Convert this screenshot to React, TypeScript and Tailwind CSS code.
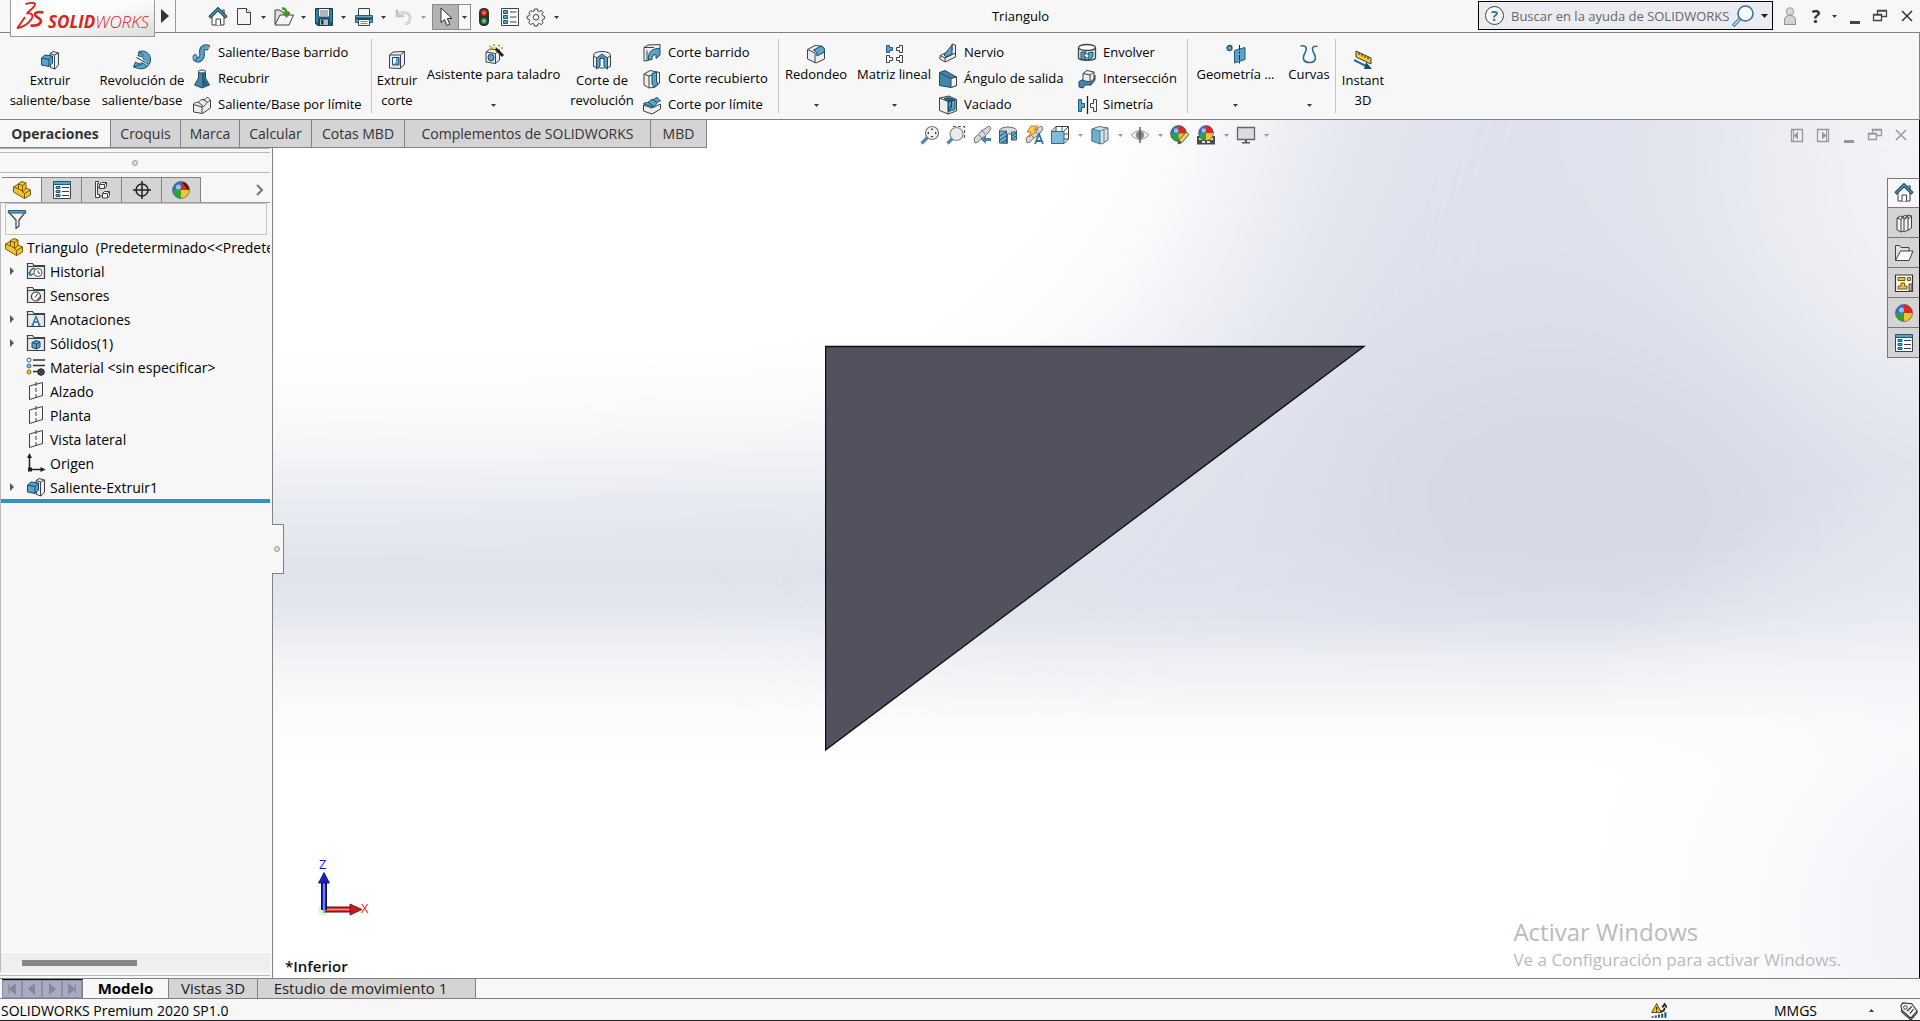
import React from 'react';

type IconProps = { size?: number };

const INK = '#3f4144';
const BLUE = '#5ba3c7';
const DEEP = '#1d5c80';
const PALE = '#eceeef';

const Svg: React.FC<{ size?: number; children: React.ReactNode }> = ({ size = 20, children }) => (
  <svg width={size} height={size} viewBox="0 0 20 20" fill="none" className="shrink-0" aria-hidden="true">
    {children}
  </svg>
);

const Caret = ({ color = '#3a3a3a', up = false }: { color?: string; up?: boolean }) => (
  <svg width="5" height="3" viewBox="0 0 5 3" className="shrink-0" aria-hidden="true">
    <path d={up ? 'M0 3h5L2.5 0z' : 'M0 0h5L2.5 3z'} fill={color} />
  </svg>
);

/* ---------- title bar icons ---------- */

const HomeIcon = () => (
  <Svg>
    <path d="M4 9v9h12V9l-6-5z" fill="#fbfbfb" stroke={INK} />
    <path d="M8 18v-6h4.500v6" fill="#fff" stroke={INK} />
    <path d="M13.800 3h2.200v4" stroke={INK} strokeWidth="1.200" />
    <path d="M1.500 10.500 10 2l8.500 8.500" stroke="#143f5a" strokeWidth="3.200" />
    <path d="M2 10 10 2.200 18 10" stroke="#4c99c1" strokeWidth="1.400" />
  </Svg>
);

const NewIcon = () => (
  <Svg>
    <path d="M3.500 1.500h9l4 4v12h-13z" fill="#f4f4f4" stroke={INK} />
    <path d="M12.500 1.500v4h4" fill="#fff" stroke={INK} />
  </Svg>
);

const OpenIcon = () => (
  <Svg>
    <path d="M1 17V3h5l2 2h7v3" fill="#dedede" stroke={INK} />
    <path d="M1 18 6 8h13.500l-4.500 10z" fill="#f5f5f5" stroke={INK} />
    <path d="M8 1.500c3 0 4.500 1 4.500 5" stroke="#3c9a10" strokeWidth="2.400" />
    <path d="M8.500 6h8l-4 5z" fill="#3c9a10" />
  </Svg>
);

const SaveIcon = () => (
  <Svg>
    <path d="M1.500 1.500h17v17h-15l-2-2z" fill={DEEP} stroke="#173f55" />
    <path d="M5 2h10v7.500H5z" fill="#f2f2f2" />
    <path d="M6 4h8M6 6h8M6 8h8" stroke="#777" />
    <path d="M5.500 12h9v6.500h-9z" fill="#b9bdc0" stroke="#173f55" />
    <path d="M7 13h2.500v4.500H7z" fill="#173f55" />
    <path d="M3 3v12M17 3v12" stroke={BLUE} />
  </Svg>
);

const PrintIcon = () => (
  <Svg>
    <path d="M4.500 8V1.500h11V8" fill="#f6f6f6" stroke={INK} />
    <path d="M1.500 8.500h17v7h-17z" fill={BLUE} stroke={DEEP} />
    <path d="M2 11.500h16" stroke="#164560" strokeWidth="2" />
    <path d="M4.500 12.500h11v6h-11z" fill="#f6f6f6" stroke={INK} />
    <path d="M6.500 14.500h7M6.500 16.500h7" stroke="#8a8a8a" />
  </Svg>
);

const UndoIcon = () => (
  <Svg>
    <path d="M3 2.500v6.500h7M4 8c3-4 12-3 12 3 0 3-2 5.500-5 6" stroke="#c3c3c3" strokeWidth="2.600" />
    <path d="M4 8c3-4 12-3 12 3 0 3-2 5.500-5 6" stroke="#eee" />
  </Svg>
);

const PointerIcon = () => (
  <Svg>
    <path d="M5 1v14.500l3.500-3 2.500 6 2.800-1.200-2.500-5.800H16z" fill="#fff" stroke="#2f2f2f" />
  </Svg>
);

const TrafficIcon = () => (
  <Svg>
    <rect x="5" y="1" width="10" height="18" rx="4.500" fill="#2f2f2f" />
    <circle cx="10" cy="5.800" r="3" fill="#e0301e" />
    <circle cx="10" cy="5.800" r="1.100" fill="#ff9c8a" />
    <circle cx="10" cy="14" r="3" fill="#2f9b3a" />
    <circle cx="10" cy="14" r="1.100" fill="#b6f0b0" />
  </Svg>
);

const ListBoxIcon = ({ header = false }: { header?: boolean }) => (
  <Svg>
    <path d="M1.500 1.500h17v17h-17z" fill="#fafafa" stroke={INK} />
    {header && <path d="M1.500 1.500h17v3h-17z" fill={BLUE} stroke={DEEP} />}
    <path
      d={header ? 'M4 6.500h4v2H4zM4 10.500h4v2H4zM4 14.500h4v2H4z' : 'M3.500 3.500h4v3h-4zM3.500 8.500h4v3h-4zM3.500 13.500h4v3h-4z'}
      fill={BLUE}
      stroke={DEEP}
    />
    <path d={header ? 'M10 7.500h7M10 11.500h7M10 15.500h7' : 'M10 5h6.500M10 10h6.500M10 15h6.500'} stroke={INK} />
  </Svg>
);

const GearIcon = () => (
  <Svg>
    <path
      d="M8.500 2h3l.5 2 1.500.7L15.400 3.500l1.800 2-1.200 1.900.6 1.400 2 .5v2.400l-2 .7-.6 1.400 1.200 1.900-2 1.900-1.900-1.100-1.500.6-.5 2h-2.800l-.5-2-1.500-.6-1.900 1.100-1.900-1.900 1.100-1.900-.6-1.500-2-.5V9.200l2-.5.600-1.400L3 5.500l1.900-2 1.800 1.100L8 4z"
      fill="#f2f2f2"
      stroke={INK}
    />
    <circle cx="10" cy="10.300" r="2.800" fill="#f7f7f7" stroke={INK} />
  </Svg>
);

const UserIcon = () => (
  <Svg>
    <circle cx="10" cy="5.500" r="3.800" fill="#d8d8d8" stroke="#9b9b9b" />
    <path d="M4.500 18.500v-4.500c0-3 2-4.500 5.500-4.500s5.500 1.500 5.500 4.500v4.500z" fill="#d4d4d4" stroke="#8f8f8f" />
  </Svg>
);

const MagnifierIcon = () => (
  <svg width="24" height="24" viewBox="0 0 24 24" fill="none" aria-hidden="true">
    <path d="m2 22 7-7" stroke="#39759a" strokeWidth="3.400" />
    <path d="m2.500 21.500 6.500-6.500" stroke="#dbe8f0" strokeWidth="1.200" />
    <circle cx="14.500" cy="9.500" r="7.500" fill="#f7f9fb" stroke="#39759a" strokeWidth="1.600" />
  </svg>
);

const MinimizeIcon = () => (
  <Svg>
    <path d="M5 12h10v3H5z" fill="currentColor" />
  </Svg>
);

const RestoreIcon = () => (
  <Svg>
    <path d="M3.500 8.500h8v6h-8zM7.500 8V4.500h9v6H12M3 9h9M7 5h10" stroke="currentColor" strokeWidth="1.300" />
  </Svg>
);

const CloseIcon = () => (
  <Svg>
    <path d="m5 5 10 10M15 5 5 15" stroke="currentColor" strokeWidth="1.500" />
  </Svg>
);

/* ---------- ribbon icons ---------- */

const ExtrudeIcon = () => (
  <Svg>
    <path d="M10 3.500 13 1.500l5.500 1.500v12l-3.500 4-4.500-1.500z" fill={PALE} stroke={INK} />
    <path d="M14.500 19V5l4-2M14.500 5 10 3.500" stroke={INK} />
    <path d="M1.500 8 5 5l7.500 1v7L9 16.500 1.500 15z" fill={BLUE} stroke="#164a68" />
    <path d="M1.500 8 9 9.500v7M9 9.500 12.500 6" stroke="#164a68" />
  </Svg>
);

const RevolveIcon = () => (
  <Svg>
    <path
      d="M7 1.500c6-2 12 2 11.500 8.500-.5 6-6 10-12 8.500L1.500 17l2-5c3 2 6 2 8-1 1-3-1-5-5.500-5z"
      fill={BLUE}
      stroke="#1b5475"
    />
    <path d="M6.500 2.500c2 0 4 1 5 3M12 13l3 4M2 17c3-2 7-2 10-4" stroke="#1b5475" />
    <path d="M5 7.500 15.500 14" stroke="#fff" strokeWidth="2.200" />
    <path d="M4.500 7.500 16 14" stroke="#222" />
  </Svg>
);

const SweepIcon = () => (
  <Svg>
    <path d="M3 15.500c4 3.500 8-1 7-5.500-1-5 3-7 7-5" stroke="#1b5475" strokeWidth="5.600" />
    <path d="M3 15.500c4 3.500 8-1 7-5.500-1-5 3-7 7-5" stroke={BLUE} strokeWidth="3.600" />
    <ellipse cx="3" cy="14.500" rx="2" ry="3" fill="#7fbedb" stroke="#1b5475" />
  </Svg>
);

const LoftIcon = () => (
  <Svg>
    <path d="M6.500 2h7v7l4 7-7.500 3L2.500 16l4-7z" fill="#3f87ad" stroke={INK} />
    <path d="M10 3v15l6-2.500-3.500-6V3z" fill="#1f5f82" />
    <ellipse cx="10" cy="2.500" rx="3.500" ry="1.500" fill="#f4f4f4" stroke={INK} />
  </Svg>
);

const BoundaryIcon = () => (
  <Svg>
    <path d="M1.500 9c2-3 4 0 6-3 3-3 5 0 8-4l3 3v8l-8 5.500L1.500 17z" fill={PALE} stroke={INK} />
    <path d="M1.500 9.500 10 12c3 0 3-4 8-6.500M10 12v6.500M6 7l5 4M10 4l5 3" stroke={INK} />
  </Svg>
);

const CutExtrudeIcon = () => (
  <Svg>
    <path d="M2.500 5 6 2l11.500-.5v13L13 18.500l-10.500-.5z" fill={PALE} stroke={INK} />
    <path d="M2.500 5h11v13.500M13.500 5l4-3.500" stroke={INK} />
    <path d="M5.500 7.500h6.500v7.500H5.500z" fill={BLUE} stroke="#164a68" />
    <path d="M6 8h3v4l-3 2.500z" fill="#fff" />
  </Svg>
);

const HoleWizardIcon = () => (
  <Svg>
    <path d="M2 8 6 5l9.500 1v10L11.500 19.500 2 18z" fill={PALE} stroke={INK} />
    <path d="M2 8l9.500 1.500v10M11.500 9.500 15.500 6" stroke={INK} />
    <ellipse cx="7" cy="13.500" rx="3" ry="3.500" fill={BLUE} stroke="#164a68" />
    <path d="m11 4 8 8" stroke="#222" strokeWidth="2.800" />
    <path d="m10 5 2-2" stroke="#f5d33c" strokeWidth="2" />
    <path d="M5 2.500h2M9 1h2M14 1.500h2M7 4h2M17 4h2" stroke="#d9861b" strokeWidth="1.600" />
  </Svg>
);

const CutRevolveIcon = () => (
  <Svg>
    <path d="M1.500 5.500v11c3 1 5 1.500 8.500 1.500s6-.5 8.500-1.500v-11" fill={PALE} stroke={INK} />
    <ellipse cx="10" cy="5" rx="8.500" ry="3.500" fill="#f6f6f6" stroke={INK} />
    <path d="m4.500 8 5.500-4 5.500 4v11l-3.500-3V8L10 6.500 8 8v8l-3.500 3z" fill={BLUE} stroke="#164a68" />
  </Svg>
);

const CutSweepIcon = () => (
  <Svg>
    <path d="M2 4.500 6 2l12-.5V5L6.500 17.500 2 18z" fill={PALE} stroke={INK} />
    <path d="M2 4.500h10M5 17.500v-10" stroke={INK} />
    <path d="M6.500 17c-1-7 3-12 11.500-11.500V12L14 15.500v-4c-3 0-4 2-4 5z" fill={BLUE} stroke="#164a68" />
  </Svg>
);

const CutLoftIcon = () => (
  <Svg>
    <path d="M2 5 8 1.500l9.500 2V14l-4 4L7 19l-5-3z" fill={PALE} stroke={INK} />
    <path d="M2 5l5 2v12M7 7l3-1" stroke={INK} />
    <path d="M10 4.500 14.500 3v9l1.500 3-4 3-2-3z" fill={BLUE} stroke="#164a68" />
  </Svg>
);

const CutBoundaryIcon = () => (
  <Svg>
    <path d="M1.500 10 10 13l8.500-4v5L10 19l-8.500-3z" fill={PALE} stroke={INK} />
    <path d="M1.500 9c2-3 4 0 6-3 3-3 5 0 7-4l4 4c-4 0-4 5-8 6z" fill={BLUE} stroke="#164a68" />
    <path d="M6 7l5 4M10 4.500l5 3" stroke="#164a68" />
  </Svg>
);

const FilletIcon = () => (
  <Svg>
    <path d="M1.500 5.500 9 1.500l6 .5c3 1 3.500 3 3.500 6v7L10 19l-8.500-4z" fill={PALE} stroke={INK} />
    <path d="M1.500 5.500 9 9v10" stroke={INK} />
    <path d="M7.500 6 15 2c3 1 3.500 3 3.500 6L11 12c0-3-1-5-3.500-6z" fill={BLUE} stroke="#164a68" />
  </Svg>
);

const PatternIcon = () => (
  <Svg>
    <path d="M2.500 1.500h3v2h3v3h-3v2h-3z" fill={BLUE} stroke={DEEP} />
    <path
      d="M18.500 1.500h-3v2h-3v3h3v2h3zM2.500 11.500h3v2h3v3h-3v2h-3zM18.500 11.500h-3v2h-3v3h3v2h3z"
      fill="#fafafa"
      stroke={INK}
    />
  </Svg>
);

const RibIcon = () => (
  <Svg>
    <path d="M2 12.500 14 7V1l3.500 1v12L7 19l-5-3z" fill={PALE} stroke={INK} />
    <path d="M2 12.500 7 15l10.500-5M7 15v4" stroke={INK} />
    <path d="M6 12 14 2v9l-6 3z" fill={BLUE} stroke="#164a68" />
  </Svg>
);

const DraftIcon = () => (
  <Svg>
    <path d="M1.500 3.500 7 1.500 18.500 8v8.500L13 18.500l-11.500-2z" fill="#3c86ad" stroke={INK} />
    <path d="M1.500 3.500 13 9.500l5.500-1.500" stroke={INK} />
    <path d="M13 9.500 18.500 8v8.500L13 18.500z" fill="#f4f4f4" stroke={INK} />
  </Svg>
);

const ShellIcon = () => (
  <Svg>
    <path d="M1.500 3 11 1l7.500 3.500V16L10 19l-8.500-3.500z" fill={PALE} stroke={INK} />
    <path d="M1.500 3 10 6.500V19M10 6.500l8.500-2" stroke={INK} />
    <path d="M10.500 7 17 5v9.500l-6.500 2z" fill={BLUE} stroke="#164a68" />
    <path d="m6 3.500 5-1 5 2-6 1.500zM10.500 16l3-4V6" fill="#2a6d92" stroke="#164a68" />
  </Svg>
);

const WrapIcon = () => (
  <Svg>
    <path d="M1.500 5v10c1 3 16 3 17 0V5" fill={PALE} stroke={INK} strokeWidth="1.300" />
    <ellipse cx="10" cy="4.500" rx="8.500" ry="3" fill="#fbfbfb" stroke={INK} strokeWidth="1.300" />
    <path d="M4 9h5v2H7v3h2v3l-5-1zM11 10l5-1v3c0 3-2 4-5 5v-3c2 0 2-2 0-2z" fill={BLUE} stroke="#164a68" />
  </Svg>
);

const IntersectIcon = () => (
  <Svg>
    <path d="M2 12.500 9 9l6 1 3-4v5l-4 5H8l-2 3-4-1z" fill="#3f87ad" stroke="#164a68" />
    <path d="M6 4.500 10 1.500l7 1.500v7l-4 3-7-1.500z" fill={PALE} stroke={INK} />
    <path d="M6 4.500 13 6v7M13 6l4-3" stroke={INK} />
  </Svg>
);

const MirrorIcon = () => (
  <Svg>
    <path d="M1.500 4.500H4.500v4h3v4h-3v4h-3z" fill={BLUE} stroke={DEEP} />
    <path d="M19.500 4.500h-3v4h-3v4h3v4h3z" fill="#fafafa" stroke={INK} />
    <path d="M10.500 1v18" stroke="#222" strokeWidth="1.300" />
  </Svg>
);

const GeometryIcon = () => (
  <Svg>
    <circle cx="3.500" cy="4" r="2.500" fill={BLUE} stroke={DEEP} strokeWidth="1.300" />
    <path d="m8.500 6.500 10.500-3v12L8.500 19z" fill={BLUE} stroke={DEEP} />
    <path d="M13.500 1v19" stroke="#222" strokeDasharray="5 1.500 2 1.500" />
  </Svg>
);

const CurvesIcon = () => (
  <Svg>
    <path d="M1.500 2c6-1 7 2 4.500 7-3.500 6-1 9.500 4.500 9.500s7.500-3.500 4.500-9c-3-6-1-8 3.500-7" stroke="#2f6d93" strokeWidth="1.600" />
  </Svg>
);

const InstantIcon = () => (
  <Svg>
    <path d="m3 1 15 7v6L3 7z" fill="#f3cd3c" stroke="#3a3a3a" />
    <path d="M6 2.500V5M9 4v2.500M12 5.500V8M15 7v2.500" stroke="#222" />
    <path d="m1 10 12 6" stroke="#2b7098" strokeWidth="2" />
    <path d="m11 19 2-7 6 7z" fill="#1d4f70" />
  </Svg>
);

/* ---------- view toolbar icons ---------- */

const ZoomFitIcon = () => (
  <Svg>
    <path d="m1.500 18.500 6-6" stroke="#4d8db3" strokeWidth="3.200" />
    <circle cx="12" cy="8" r="6.500" fill="#f1f3f5" stroke="#777" strokeWidth="1.200" />
    <path d="m12 3 1.500 2h-3zM12 13l1.500-2h-3zM7 8l2-1.500v3zM17 8l-2-1.500v3z" fill="#444" />
  </Svg>
);

const ZoomAreaIcon = () => (
  <Svg>
    <path d="M7 1.500h11.500V14" stroke="#555" strokeDasharray="3 2" strokeWidth="1.200" />
    <path d="m1.500 18.500 5-5" stroke="#4d8db3" strokeWidth="3.200" />
    <circle cx="10.500" cy="9" r="6.500" fill="#e9edf0" stroke="#888" strokeWidth="1.200" />
  </Svg>
);

const SpyGlass = () => (
  <>
    <path d="m2 13 5-4 2-3 5-3 3-2 2 2-2 4-4 4-3 2-4 4-3 1z" fill="#d5d7d8" stroke="#777" />
    <path d="m6 9 4 4M10 5l3 4" stroke="#777" />
  </>
);

const PrevViewIcon = () => (
  <Svg>
    <SpyGlass />
    <path d="m9 14.500 5-4v2.500h5v3h-5V19z" fill="#4286ac" />
  </Svg>
);

const SectionIcon = () => (
  <Svg>
    <path d="M1.500 5C4 1 16 1 18.500 5v9l-5 1V9h-4v9.500l-8-1z" fill="#d9dbdc" stroke="#666" />
    <path d="M1.500 6h7v12h-7zM13.500 7h5v8h-5z" fill="#6fb2d2" stroke="#2c5f7c" />
    <path d="m2 11 6-4M2 15l6-4M3 18l5-3M14 11l4-3M14 14l4-3" stroke="#1d4f6c" />
  </Svg>
);

const DynamicViewIcon = () => (
  <Svg>
    <SpyGlass />
    <path d="M7 1h7l-4 4h4L5 12l2-5H3z" fill="#f7cf4e" stroke="#d2742a" />
    <path d="m11 19 4-10 4 10M12.500 16h5" stroke="#2f7198" strokeWidth="1.800" />
  </Svg>
);

const OrientationIcon = () => (
  <Svg>
    <path d="M6 6V1.500h12.500V14H14M6 6l-4.500.5M1.500 6 6 1.500M14 6l4.500-4.500M14 18.500l4.500-4.500M12 1.500V6M14 9h4.500" stroke="#444" />
    <path d="M1.500 6.500h12.500v12H1.500z" fill="#7fbcd9" stroke="#2d6a8c" />
  </Svg>
);

const DisplayStyleIcon = () => (
  <Svg>
    <path d="m2 4 7-2.500L18 3v12l-6 4-10-3z" fill="#cfe4ee" stroke="#666" />
    <path d="m2 4 8 2v13L2 16z" fill="#6fb0d0" stroke="#4a7790" />
    <path d="m10 6 8-3M14 5v12.500" stroke="#777" />
  </Svg>
);

const EyeIcon = () => (
  <Svg>
    <path d="M1 10c5-6 13-6 18 0-5 6-13 6-18 0z" fill="#e6e6e6" stroke="#aaa" />
    <circle cx="10" cy="10" r="4" fill="#888" />
    <path d="M10 2v16" stroke="#555" strokeWidth="1.400" />
  </Svg>
);

const Ball = ({ cx = 10, cy = 10, r = 8.5 }: { cx?: number; cy?: number; r?: number }) => (
  <g transform={`translate(${cx} ${cy}) scale(${r / 10})`}>
    <circle r="10" fill="#2f6fd0" />
    <path d="M0 0V-10A10 10 0 0 1 10 0z" fill="#e0281f" />
    <path d="M0 0H10A10 10 0 0 1 0 10z" fill="#f1c52d" />
    <path d="M0 0V10A10 10 0 0 1-10 0z" fill="#2fa336" />
    <circle cx="-3" cy="-3.500" r="3" fill="#fff" opacity=".55" />
    <circle r="10" fill="none" stroke="#555" strokeWidth="1" opacity=".7" />
  </g>
);

const AppearanceIcon = () => (
  <Svg>
    <Ball cx={8.5} cy={8.5} r={8} />
    <path d="m8 19 1-4 7-8 3 2.500-7 8z" fill="#f4d05a" stroke="#555" />
    <path d="m8 19 1-4 3 2.500z" fill="#555" />
  </Svg>
);

const SceneIcon = () => (
  <Svg>
    <path d="M1 11h18v8.500H1z" fill="#4c4c4c" />
    <path d="M3 13h3v2H3zM14 13h3v2h-3zM6 16h3v2H6zM11 16h3v2h-3z" fill="#ddd" />
    <Ball cx={10} cy={8} r={7.5} />
  </Svg>
);

const MonitorIcon = () => (
  <Svg>
    <path d="M1.500 2.500h17v12h-17z" fill="#dcdcdc" stroke="#666" strokeWidth="1.300" />
    <path d="M9 15h2v2.500H9zM6 17h8v1.500H6z" fill="#555" />
  </Svg>
);

const PaneArrowIcon = ({ right = false }: { right?: boolean }) => (
  <Svg>
    <path d="M4.500 4.500h11v12h-11z" stroke="currentColor" strokeWidth="1.300" />
    <path d={right ? 'M13.500 4v13' : 'M6.500 4v13'} stroke="currentColor" />
    <path d={right ? 'M9 6.500v8l4.500-4z' : 'M11 6.500v8l-4.500-4z'} fill="currentColor" />
  </Svg>
);

/* ---------- manager panel icons ---------- */

const PartIcon = () => (
  <Svg>
    <path d="M1.500 7 6.500 4V3.500L10 1.500 14 3v5l4.500 2v5l-6 3.500L1.500 12z" fill="#f2c230" stroke="#7a5a08" />
    <path d="m1.500 7 5 2 0-5 4 1.500V12l2 1.500v5M6.500 9l4 2M10.500 5.500 14 3M12.500 13.500l6-3.500M10.500 12 14 8" stroke="#7a5a08" />
  </Svg>
);

const ConfigIcon = () => (
  <Svg>
    <path d="M3.500 1.500h3v2h-1v11h2v3h-4z" fill="#f5f5f5" stroke={INK} />
    <path d="M5.500 7.500h2M7.500 16h3" stroke={INK} />
    <path d="m7.500 4.500 2-2h5v4l-2 2h-5z" fill="#f5f5f5" stroke={INK} />
    <path d="m10.500 13.500 2-2h5v4l-2 2.500h-5z" fill="#f5f5f5" stroke={INK} />
    <path d="M7.500 4.500h5v4M12.500 4.500l2-2M10.500 13.500h5v4.500M15.500 13.500l2-2" stroke={INK} />
  </Svg>
);

const TargetIcon = () => (
  <Svg>
    <circle cx="10" cy="10" r="6" stroke="#222" strokeWidth="1.500" />
    <path d="M10 1v18M1 10h18" stroke="#222" strokeWidth="1.500" />
  </Svg>
);

const BallIcon = ({ size = 20 }: IconProps) => (
  <Svg size={size}>
    <Ball />
  </Svg>
);

const DisplayBallIcon = () => (
  <Svg>
    <Ball />
    <path d="M11 3c3-1 6 2 7 6l-2 .5c-1-3-3-5-5-6.500z" fill="#222" />
  </Svg>
);

const FilterIcon = () => (
  <Svg>
    <path d="M1.500 3h17l-6.500 8v6l-3 2.500V11z" fill="#f3f3f3" stroke={INK} strokeWidth="1.200" />
    <path d="M1.500 1.500h17v2.500h-17z" fill={BLUE} stroke={DEEP} />
  </Svg>
);

const Folder: React.FC<{ children: React.ReactNode }> = ({ children }) => (
  <Svg>
    <path d="M1.500 17.500v-15h5l1.500 2h10.500v13z" fill="#e8eaeb" stroke={INK} strokeWidth="1.200" />
    <path d="M2 5.500h16" stroke={INK} />
    {children}
  </Svg>
);

const HistoryFolder = () => (
  <Folder>
    <circle cx="12" cy="11.500" r="4" fill="#fff" stroke="#555" />
    <path d="M12 9.500v2l2 1" stroke="#333" />
    <path d="M4 12.500c0-3 2-5 5-5M2.500 11.500l2 3 3-2" stroke="#2f7198" strokeWidth="1.500" />
  </Folder>
);

const SensorFolder = () => (
  <Folder>
    <circle cx="10" cy="11.500" r="4.500" fill="#fff" stroke="#333" strokeWidth="1.200" />
    <path d="m9 12.500 3-4" stroke="#333" />
    <path d="M10 15.500 14 11c.5 3-1 5-4 4.500z" fill="#e1401f" />
  </Folder>
);

const NoteFolder = () => (
  <Folder>
    <path d="m6.500 16 3.500-8.500 3.500 8.500M8 13h4.500M5.500 16H8M12 16h2.500" stroke="#2f7198" strokeWidth="1.400" />
  </Folder>
);

const SolidFolder = () => (
  <Folder>
    <path d="m6 9.500 4-2 4 1.500v5L10.500 16 6 14.500z" fill={BLUE} stroke="#164a68" />
    <path d="m6 9.500 4.500 1.500v5M10.500 11 14 9" stroke="#164a68" />
  </Folder>
);

const MaterialIcon = () => (
  <Svg>
    <path d="M7 3h12M7 8.500h12M7 14.500h5" stroke="#333" strokeWidth="1.600" />
    <circle cx="3" cy="3" r="2" fill="#f5f5f5" stroke="#555" />
    <circle cx="3" cy="9" r="2" fill="#7fc1e3" stroke="#2f7198" />
    <circle cx="3" cy="15" r="2" fill="#f3c22d" stroke="#8b6a0c" />
    <circle cx="15" cy="15" r="2.600" stroke="#333" strokeWidth="2" />
    <path d="M15 11v8M11 15h8M12.200 12.200l5.600 5.600M17.800 12.200l-5.600 5.600" stroke="#333" />
  </Svg>
);

const PlaneIcon = () => (
  <Svg>
    <path d="m3.500 5 13-3.500v13l-13 4z" stroke={INK} />
    <path d="M10 1v18" stroke={INK} strokeDasharray="4 2" />
  </Svg>
);

const OriginIcon = () => (
  <Svg>
    <path d="M3.500 4v12.500H16" stroke="#222" strokeWidth="1.500" />
    <path d="m3.500 0 2.500 5H1zM19.500 16.500l-5 2.500v-5zM2 14.500h4v4H2z" fill="#222" />
  </Svg>
);

/* ---------- task pane icons ---------- */

const LibraryIcon = () => (
  <Svg>
    <path d="m3 5 3.500-2 3.500 1v14l-3 1-4-2zM7 5l3.500-2.500L14 3v14l-4 2M11 5l3-3 3.500 1v12L14 17.500" fill="#f2f2f2" stroke={INK} />
    <path d="m3 5 4 1.500V19M7 6.500 10 4M10 7l4-3.500M14 6l3.500-3" stroke={INK} />
  </Svg>
);

const FolderOpenIcon = () => (
  <Svg>
    <path d="M1.500 17.500v-15h4l1.500 2h8V8" fill="#e1e1e1" stroke={INK} />
    <path d="M1.500 17.500 6.500 8h12.500l-4 9.500z" fill="#fafafa" stroke={INK} />
  </Svg>
);

const PaletteIcon = () => (
  <Svg>
    <path d="M1.500 2h17v16.500h-17z" fill="#fafafa" stroke="#333" strokeWidth="1.200" />
    <path d="M4 4.500h7v3H4zM13.500 4.500h3v3h-3zM7 10h3.500v3H13v3H4v-3h3z" fill="#f3c22d" stroke="#7a5a08" />
    <path d="M15 11h3v7h-3z" fill="#aaa" stroke="#555" />
  </Svg>
);

const StatusWarnIcon = () => (
  <Svg size={16}>
    <path d="M2 18.500v-2M6 18.500v-3M10 18.500v-4M14 18.500v-5M18 18.500v-7" stroke="#1f5578" strokeWidth="2.600" />
    <path d="m7 1 6 11H1z" fill="#f7c52b" stroke="#7a4c00" strokeWidth="1.300" />
    <path d="M7 5v3.500M7 9.500V11" stroke="#222" strokeWidth="1.600" />
    <path d="M12 10.500c4 0 5-2 5-5M14 5.500l3-4 3 4" stroke="#222" strokeWidth="2.200" />
  </Svg>
);

const TagIcon = () => (
  <Svg size={18}>
    <path d="m1 4 2-3 10 1 6 8-7 8L2 9z" fill="#f2f2f2" stroke="#333" strokeWidth="1.200" />
    <path d="m2 9 0 2 10 9 7-8v-2" stroke="#333" strokeWidth="1.200" />
    <circle cx="6" cy="6" r="2" stroke="#333" />
    <path d="m8 10 5-5M11 13l4-5" stroke="#333" strokeWidth="1.200" />
  </Svg>
);

/* ---------- building blocks ---------- */

const ToolButton: React.FC<{ label: string; className?: string; children: React.ReactNode }> = ({
  label,
  className = 'w-[26px]',
  children,
}) => (
  <button type="button" aria-label={label} className={`flex h-full shrink-0 items-center justify-center ${className}`}>
    {children}
  </button>
);

const MenuTool: React.FC<{ label: string; disabled?: boolean; children: React.ReactNode }> = ({ label, disabled, children }) => (
  <div className="flex h-full w-[38px]">
    <ToolButton label={label} className="w-5">{children}</ToolButton>
    <ToolButton label={`${label}: opciones`} className="w-[18px]">
      <Caret color={disabled ? '#9a9a9a' : '#3a3a3a'} />
    </ToolButton>
  </div>
);

interface BigButtonProps {
  lines: string[];
  icon: React.ReactNode;
  width: string;
  menu?: boolean;
}

const BigButton: React.FC<BigButtonProps> = ({ lines, icon, width, menu }) => (
  <button type="button" className={`flex shrink-0 flex-col items-center ${width} ${menu ? 'pt-[11px]' : 'pt-[17px]'}`}>
    {icon}
    {lines.map((line) => (
      <span key={line} className="whitespace-nowrap leading-5">{line}</span>
    ))}
    {menu && <span className="pt-5"><Caret /></span>}
  </button>
);

const SmallColumn: React.FC<{ items: [string, React.ReactNode][]; width: string }> = ({ items, width }) => (
  <div className={`flex shrink-0 flex-col pt-[7px] ${width}`}>
    {items.map(([label, icon]) => (
      <button key={label} type="button" className="flex h-[26px] items-center gap-1.5 whitespace-nowrap pl-[3px]">
        {icon}
        {label}
      </button>
    ))}
  </div>
);

const Separator = () => <div className="my-1.5 w-px shrink-0 bg-[#c4c4c4]" />;

const ribbonTabs: [string, string][] = [
  ['Croquis', 'w-[70px]'],
  ['Marca', 'w-[59px]'],
  ['Calcular', 'w-[72px]'],
  ['Cotas MBD', 'w-[93px]'],
  ['Complementos de SOLIDWORKS', 'w-[246px]'],
  ['MBD', 'w-[57px]'],
];

const treeItems: { label: string; icon: React.ReactNode; expandable?: boolean }[] = [
  { label: 'Historial', icon: <HistoryFolder />, expandable: true },
  { label: 'Sensores', icon: <SensorFolder /> },
  { label: 'Anotaciones', icon: <NoteFolder />, expandable: true },
  { label: 'Sólidos(1)', icon: <SolidFolder />, expandable: true },
  { label: 'Material <sin especificar>', icon: <MaterialIcon /> },
  { label: 'Alzado', icon: <PlaneIcon /> },
  { label: 'Planta', icon: <PlaneIcon /> },
  { label: 'Vista lateral', icon: <PlaneIcon /> },
  { label: 'Origen', icon: <OriginIcon /> },
  { label: 'Saliente-Extruir1', icon: <ExtrudeIcon />, expandable: true },
];

const managerTabs: [string, React.ReactNode][] = [
  ['Propiedades', <ListBoxIcon header />],
  ['Configuraciones', <ConfigIcon />],
  ['Cotas', <TargetIcon />],
  ['Apariencias', <DisplayBallIcon />],
];

const taskTabs: [string, React.ReactNode][] = [
  ['Inicio', <HomeIcon />],
  ['Biblioteca', <LibraryIcon />],
  ['Explorador', <FolderOpenIcon />],
  ['Paleta de vistas', <PaletteIcon />],
  ['Apariencias', <BallIcon />],
  ['Propiedades', <ListBoxIcon header />],
];

const navPaths = ['M6 4v12M14 4v12l-7-6z', 'M13 4v12l-7-6z', 'M7 4v12l7-6z', 'M14 4v12M6 4v12l7-6z'];

/* ---------- sections ---------- */

const TitleBar = () => (
  <header className="relative flex h-[33px] shrink-0 items-center border-b border-[#828282] bg-[#f7f7f7]">
    <div className="flex h-full w-44 shrink-0 items-center justify-end border-r border-[#9a9a9a]">
      <div className="absolute left-[10px] top-0 z-10 flex h-[37px] w-[145px] items-center border border-t-0 border-[#9a9a9a] bg-linear-to-br from-white via-[#fbfbfb] to-[#dcdcdc] pl-[5px] text-[#d9261c]">
        <svg width="28" height="30" viewBox="0 0 28 30" fill="none" className="mr-1 shrink-0 self-start" aria-hidden="true">
          <path d="M9.500 4.200c3-1.600 9-2 9.500-.2.500 2-3.500 5.500-8 9" stroke="currentColor" strokeWidth="1.900" />
          <path d="M10.500 13.500c5-1 7.500 1.500 5 5.500C12.500 23.500 7 27 1.500 28L9 17" stroke="currentColor" strokeWidth="1.900" strokeLinejoin="round" />
          <path d="M27.500 12.500c-4-1-9-.5-8.500 2.500.5 2 6 3 6 6-.5 4-6 5-10.500 4.500" stroke="currentColor" strokeWidth="2.600" />
        </svg>
        <span className="whitespace-nowrap pt-1.5 text-[17px] italic leading-none">
          <b>SOLID</b>
          <span className="font-light">WORKS</span>
        </span>
      </div>
      <ToolButton label="Mostrar menú" className="w-5">
        <svg width="8" height="14" viewBox="0 0 8 14" aria-hidden="true"><path d="M0 0v14l8-7z" fill="#333" /></svg>
      </ToolButton>
    </div>
    <div className="flex h-full items-center pl-8 pt-0.5">
      <ToolButton label="Inicio" className="mr-1.5 w-5"><HomeIcon /></ToolButton>
      <div className="flex h-full gap-0.5">
        <MenuTool label="Nuevo"><NewIcon /></MenuTool>
        <MenuTool label="Abrir"><OpenIcon /></MenuTool>
        <MenuTool label="Guardar"><SaveIcon /></MenuTool>
        <MenuTool label="Imprimir"><PrintIcon /></MenuTool>
        <MenuTool label="Deshacer" disabled><UndoIcon /></MenuTool>
      </div>
      <div className="flex h-[26px] w-[39px] border border-[#8c8c8c]">
        <ToolButton label="Seleccionar" className="w-[26px] border-r border-[#8c8c8c] bg-[#b3b3b3]"><PointerIcon /></ToolButton>
        <ToolButton label="Seleccionar: opciones" className="flex-1"><Caret /></ToolButton>
      </div>
      <ToolButton label="Reconstruir"><TrafficIcon /></ToolButton>
      <ToolButton label="Propiedades de archivo"><ListBoxIcon /></ToolButton>
      <ToolButton label="Opciones"><GearIcon /></ToolButton>
      <ToolButton label="Más opciones" className="w-[14px]"><Caret /></ToolButton>
    </div>
    <h1 className="flex-1 pt-0.5 text-center text-[13px]">Triangulo</h1>
    <form className="mb-px flex h-[29px] w-[295px] shrink-0 items-center border border-black bg-[#ebecf1] pl-1.5" onSubmit={(e) => e.preventDefault()}>
      <label htmlFor="help-search" className="flex size-[19px] shrink-0 items-center justify-center rounded-full border border-[#444] bg-[#fafafa] text-[15px] font-bold leading-none text-[#2a7599]">
        ?
      </label>
      <input
        id="help-search"
        type="text"
        placeholder="Buscar en la ayuda de SOLIDWORKS"
        className="min-w-0 flex-1 bg-transparent pl-[7px] pt-0.5 text-[13px] outline-none placeholder:text-[#666]"
      />
      <ToolButton label="Buscar"><MagnifierIcon /></ToolButton>
      <ToolButton label="Opciones de búsqueda" className="w-4">
        <svg width="7" height="4" viewBox="0 0 7 4" aria-hidden="true"><path d="M0 0h7L3.500 4z" fill="#222" /></svg>
      </ToolButton>
    </form>
    <ToolButton label="Iniciar sesión" className="w-[34px]"><UserIcon /></ToolButton>
    <ToolButton label="Ayuda" className="w-[18px] text-lg font-bold text-[#333]">?</ToolButton>
    <ToolButton label="Menú de ayuda" className="w-[18px]"><Caret /></ToolButton>
    <ToolButton label="Minimizar" className="w-6 pt-1.5 text-[#444]"><MinimizeIcon /></ToolButton>
    <ToolButton label="Restaurar" className="w-[26px] text-[#444]"><RestoreIcon /></ToolButton>
    <ToolButton label="Cerrar" className="w-[27px] text-[#333]"><CloseIcon /></ToolButton>
  </header>
);

const Ribbon = () => (
  <div className="flex h-[87px] shrink-0 border-b border-r border-[#828282] bg-[#f7f7f7] text-[13px]">
    <BigButton lines={['Extruir', 'saliente/base']} icon={<ExtrudeIcon />} width="w-[100px]" />
    <BigButton lines={['Revolución de', 'saliente/base']} icon={<RevolveIcon />} width="w-[84px]" />
    <SmallColumn
      width="w-[187px] pl-[5px]"
      items={[
        ['Saliente/Base barrido', <SweepIcon />],
        ['Recubrir', <LoftIcon />],
        ['Saliente/Base por límite', <BoundaryIcon />],
      ]}
    />
    <Separator />
    <BigButton lines={['Extruir', 'corte']} icon={<CutExtrudeIcon />} width="w-[50px]" />
    <BigButton lines={['Asistente para taladro']} icon={<HoleWizardIcon />} width="w-[143px]" menu />
    <BigButton lines={['Corte de', 'revolución']} icon={<CutRevolveIcon />} width="w-[74px]" />
    <SmallColumn
      width="w-[139px]"
      items={[
        ['Corte barrido', <CutSweepIcon />],
        ['Corte recubierto', <CutLoftIcon />],
        ['Corte por límite', <CutBoundaryIcon />],
      ]}
    />
    <Separator />
    <BigButton lines={['Redondeo']} icon={<FilletIcon />} width="w-[74px]" menu />
    <BigButton lines={['Matriz lineal']} icon={<PatternIcon />} width="w-[82px]" menu />
    <SmallColumn
      width="w-[139px]"
      items={[
        ['Nervio', <RibIcon />],
        ['Ángulo de salida', <DraftIcon />],
        ['Vaciado', <ShellIcon />],
      ]}
    />
    <SmallColumn
      width="w-[113px]"
      items={[
        ['Envolver', <WrapIcon />],
        ['Intersección', <IntersectIcon />],
        ['Simetría', <MirrorIcon />],
      ]}
    />
    <Separator />
    <BigButton lines={['Geometría ...']} icon={<GeometryIcon />} width="w-[95px]" menu />
    <BigButton lines={['Curvas']} icon={<CurvesIcon />} width="w-[52px]" menu />
    <Separator />
    <BigButton lines={['Instant', '3D']} icon={<InstantIcon />} width="w-[54px]" />
  </div>
);

const RibbonTabs = () => (
  <nav className="absolute left-0 top-0 z-10 flex h-7 text-[14px] text-[#333]">
    <button type="button" className="w-[110px] border-b border-[#828282] bg-[#f7f7f7] font-bold">Operaciones</button>
    {ribbonTabs.map(([label, width]) => (
      <button key={label} type="button" className={`whitespace-nowrap border-b border-l border-[#828282] bg-[#d4d4d4] last:border-r ${width}`}>
        {label}
      </button>
    ))}
  </nav>
);

const FeatureManager = () => (
  <aside className="relative flex w-[273px] shrink-0 flex-col border-r border-[#828282] bg-[#f7f7f7] pt-7 pr-0.5">
    <div className="h-[5px] shrink-0 border-b border-t border-b-[#b9b9b9] border-t-[#9fb9bf]" />
    <div className="flex h-5 shrink-0 items-center justify-center border-b border-[#b9b9b9]">
      <span className="size-1.5 rounded-full border border-[#999] bg-[#ddd]" />
    </div>
    <div className="mt-1 flex h-[26px] shrink-0 items-stretch border-b border-[#9a9a9a]">
      <button type="button" aria-label="Árbol de operaciones" className="ml-0.5 flex w-[39px] items-center justify-center border-t border-[#828282]">
        <PartIcon />
      </button>
      {managerTabs.map(([label, icon]) => (
        <button key={label} type="button" aria-label={label} className="flex w-10 items-center justify-center border-l border-t border-[#828282] bg-[#d4d4d4] last-of-type:border-r">
          {icon}
        </button>
      ))}
      <span className="flex flex-1 items-center justify-end pr-1.5">
        <svg width="8" height="12" viewBox="0 0 8 12" fill="none" aria-hidden="true"><path d="m1 1 5 5-5 5" stroke="#777" strokeWidth="2" /></svg>
      </span>
    </div>
    <div className="flex min-h-0 flex-1 flex-col border-l border-[#b9b9b9]">
      <label className="ml-1 mr-[3px] flex h-8 shrink-0 items-center border border-[#c4c4c4] pl-px">
        <FilterIcon />
        <input type="text" aria-label="Filtrar" className="min-w-0 flex-1 bg-transparent outline-none" />
      </label>
      <div className="flex h-6 shrink-0 items-center gap-[3px] overflow-hidden whitespace-pre pl-[3px]">
        <PartIcon />
        <span>{'Triangulo  (Predeterminado<<Predeterminado'}</span>
      </div>
      <ul>
        {treeItems.map((item) => (
          <li key={item.label} className="flex h-6 items-center whitespace-nowrap pl-[9px]">
            <span className="w-4">
              {item.expandable && (
                <svg width="4" height="8" viewBox="0 0 4 8" aria-hidden="true"><path d="M0 0v8l4-4z" fill="#555" /></svg>
              )}
            </span>
            {item.icon}
            <span className="pl-1">{item.label}</span>
          </li>
        ))}
      </ul>
      <div className="h-1 shrink-0 bg-[#3a8dc5]" />
      <div className="mt-auto flex h-5 shrink-0 items-center border-t border-white bg-[#efefef] pl-[21px]">
        <div className="h-1.5 w-[115px] bg-[#868686]" />
      </div>
    </div>
    <div className="mb-0.5 h-1 shrink-0 border-b border-[#b9b9b9]" />
    <div className="absolute left-[272px] top-[404px] z-10 flex h-[50px] w-3 items-center justify-start border border-l-0 border-[#828282] bg-[#f7f7f7] pl-0.5">
      <span className="size-1.5 rounded-full border border-[#999] bg-[#ddd]" />
    </div>
  </aside>
);

const Backdrop = () => (
  <svg className="absolute inset-0 size-full" viewBox="0 0 1646 858" preserveAspectRatio="none" aria-hidden="true">
    <defs>
      <linearGradient id="band" x1="0" y1="0" x2="0" y2="858" gradientUnits="userSpaceOnUse">
        <stop offset=".25" stopColor="#fff" />
        <stop offset=".38" stopColor="#f2f3f6" />
        <stop offset=".45" stopColor="#e6e9f0" />
        <stop offset=".53" stopColor="#e0e3ec" />
        <stop offset=".575" stopColor="#e5e8f0" />
        <stop offset=".62" stopColor="#f1f2f5" />
        <stop offset=".7" stopColor="#fcfcfd" />
        <stop offset=".76" stopColor="#fff" />
      </linearGradient>
      <linearGradient id="fade" x1="0" y1="0" x2="0" y2="858" gradientUnits="userSpaceOnUse">
        <stop offset=".5" stopColor="#fff" />
        <stop offset=".58" stopColor="#999" />
        <stop offset=".63" stopColor="#333" />
        <stop offset=".72" stopColor="#000" />
      </linearGradient>
      <mask id="floor"><rect width="1646" height="858" fill="url(#fade)" /></mask>
      <radialGradient id="corner" cx="1700" cy="800" r="460" gradientUnits="userSpaceOnUse">
        <stop offset="0" stopColor="#eceef5" />
        <stop offset="1" stopColor="#fff" stopOpacity="0" />
      </radialGradient>
      <filter id="soft" x="-50%" y="-50%" width="200%" height="200%"><feGaussianBlur stdDeviation="95" /></filter>
    </defs>
    <rect width="1646" height="858" fill="#fff" />
    <rect width="1646" height="858" fill="url(#band)" />
    <g mask="url(#floor)">
      <g filter="url(#soft)">
        <path d="M-100-100H960L880 100 560 220 200 270-100 290z" fill="#fff" />
        <path d="M1090-300H1450L1900 100V700H600L740 360 940 200z" fill="#dfe2ec" />
        <ellipse cx="1300" cy="380" rx="260" ry="130" fill="#d2d6e3" />
        <ellipse cx="1690" cy="50" rx="220" ry="230" fill="#f3f4f7" />
      </g>
    </g>
    <rect width="1646" height="858" fill="url(#corner)" />
  </svg>
);

const Viewport = () => (
  <main className="relative flex min-w-0 flex-1 flex-col border-r border-black">
    <Backdrop />
    <div className="relative grid h-[30px] shrink-0 grid-cols-[1fr_auto_1fr]">
      <span />
      <div className="flex pr-0.5">
        <ToolButton label="Zoom para ajustar"><ZoomFitIcon /></ToolButton>
        <ToolButton label="Zoom encuadre"><ZoomAreaIcon /></ToolButton>
        <ToolButton label="Vista previa"><PrevViewIcon /></ToolButton>
        <ToolButton label="Vista de sección"><SectionIcon /></ToolButton>
        <ToolButton label="Vistas de anotación"><DynamicViewIcon /></ToolButton>
        <ToolButton label="Orientación"><OrientationIcon /></ToolButton>
        <ToolButton label="Orientación: opciones" className="w-[14px]"><Caret color="#999" /></ToolButton>
        <ToolButton label="Estilo de visualización"><DisplayStyleIcon /></ToolButton>
        <ToolButton label="Estilo: opciones" className="w-[14px]"><Caret color="#999" /></ToolButton>
        <ToolButton label="Ocultar o mostrar"><EyeIcon /></ToolButton>
        <ToolButton label="Mostrar: opciones" className="w-[14px]"><Caret color="#999" /></ToolButton>
        <ToolButton label="Editar apariencia"><AppearanceIcon /></ToolButton>
        <ToolButton label="Aplicar escena"><SceneIcon /></ToolButton>
        <ToolButton label="Escena: opciones" className="w-[14px]"><Caret color="#999" /></ToolButton>
        <ToolButton label="Configuración de vista"><MonitorIcon /></ToolButton>
        <ToolButton label="Vista: opciones" className="w-[14px]"><Caret color="#999" /></ToolButton>
      </div>
      <div className="flex justify-end pr-[5px] text-[#999]">
        <ToolButton label="Panel izquierdo"><PaneArrowIcon /></ToolButton>
        <ToolButton label="Panel derecho"><PaneArrowIcon right /></ToolButton>
        <ToolButton label="Minimizar documento" className="w-[26px] pt-1.5"><MinimizeIcon /></ToolButton>
        <ToolButton label="Restaurar documento"><RestoreIcon /></ToolButton>
        <ToolButton label="Cerrar documento"><CloseIcon /></ToolButton>
      </div>
    </div>

    <div className="relative mt-7 flex flex-col self-end border-l border-t border-[#777]">
      {taskTabs.map(([label, icon], i) => (
        <button key={label} type="button" aria-label={label} className={`flex w-[31px] items-center justify-center border-b border-[#777] ${i === 0 ? 'h-[29px] bg-[#f7f7f7]' : 'h-[30px] bg-[#d4d4d4]'}`}>
          {icon}
        </button>
      ))}
    </div>

    {/* extruded part, seen from below */}
    <svg className="absolute left-[552px] top-[225px]" width="542" height="408" viewBox="0 0 542 408" aria-hidden="true">
      <path d="M.5 1.500H539L.5 405z" fill="#51525e" stroke="#0c0c12" strokeWidth="1.300" />
    </svg>

    <div className="relative mt-auto flex items-end justify-between pl-3 pr-[78px]">
      <div>
        <svg width="80" height="64" viewBox="0 0 80 64" fill="none" aria-hidden="true" className="mb-9">
          <circle cx="39" cy="54" r="6" fill="#dff5df" />
          <path d="M39 51v6" stroke="#1a8a1a" />
          <path d="M40 53.500h25" stroke="#5a0f0f" strokeWidth="6" />
          <path d="M40 53.500h25" stroke="#d01c1c" strokeWidth="4" />
          <path d="M40 53.500h25" stroke="#f19a9a" strokeWidth="1.500" />
          <path d="M65 48v11l12-5.500z" fill="#c81919" stroke="#5a0f0f" strokeWidth=".8" />
          <path d="M39 54V27" stroke="#0e0e58" strokeWidth="6" />
          <path d="M39 54V27" stroke="#1d1dc0" strokeWidth="4" />
          <path d="M39 54V27" stroke="#9c9cf5" strokeWidth="1.500" />
          <path d="M33.500 27h11L39 16.500z" fill="#1d1dc0" stroke="#0e0e58" strokeWidth=".8" />
        </svg>
        <p className="pb-0.5 text-[15px] font-semibold leading-5 text-[#111]">*Inferior</p>
      </div>
      <div className="pb-1.5 text-[#b9babd]">
        <p className="text-[24px] leading-8">Activar Windows</p>
        <p className="text-[17px] leading-6">Ve a Configuración para activar Windows.</p>
      </div>
      <span className="absolute left-[46px] top-0 text-[13px] leading-4 text-[#1414ee]">Z</span>
      <span className="absolute left-[88px] top-11 text-[13px] leading-4 text-[#ee1414]">X</span>
    </div>
  </main>
);

const BottomTabs = () => (
  <nav className="flex h-[21px] shrink-0 border-y border-[#828282] bg-[#f7f7f7] pl-0.5 text-[15px] leading-[17px] text-[#222]">
    <div className="flex w-[81px] border-r border-t border-t-[#111] border-r-[#828282]">
      {navPaths.map((d, i) => (
        <button key={d} type="button" aria-label={`Desplazar pestañas ${i + 1}`} className="flex w-5 items-center justify-center border border-[#8d8fa8] bg-[#a9abc2]">
          <svg width="16" height="16" viewBox="0 0 20 20" aria-hidden="true"><path d={d} fill="#85879d" stroke="#85879d" strokeWidth="1.500" /></svg>
        </button>
      ))}
    </div>
    <button type="button" className="w-[85px] font-bold text-black">Modelo</button>
    <button type="button" className="w-[89px] border-l border-[#828282] bg-[#d4d4d4]">Vistas 3D</button>
    <button type="button" className="w-[219px] border-x border-[#828282] bg-[#d4d4d4] pr-3">Estudio de movimiento 1</button>
  </nav>
);

const StatusBar = () => (
  <footer className="flex h-[22px] shrink-0 items-center border-b border-[#222] bg-[#f7f7f7] pl-px pr-0.5 pt-0.5">
    <span className="flex-1">SOLIDWORKS Premium 2020 SP1.0</span>
    <StatusWarnIcon />
    <button type="button" className="ml-[107px] mr-[52px]">MMGS</button>
    <Caret up />
    <span className="ml-[26px]"><TagIcon /></span>
  </footer>
);

const App = () => (
  <div className="flex h-screen flex-col overflow-hidden bg-[#f7f7f7] font-['Open_Sans','Noto_Sans',sans-serif] text-[14px] text-black">
    <TitleBar />
    <Ribbon />
    <div className="relative flex min-h-0 flex-1">
      <RibbonTabs />
      <FeatureManager />
      <Viewport />
    </div>
    <BottomTabs />
    <StatusBar />
  </div>
);

export default App;
